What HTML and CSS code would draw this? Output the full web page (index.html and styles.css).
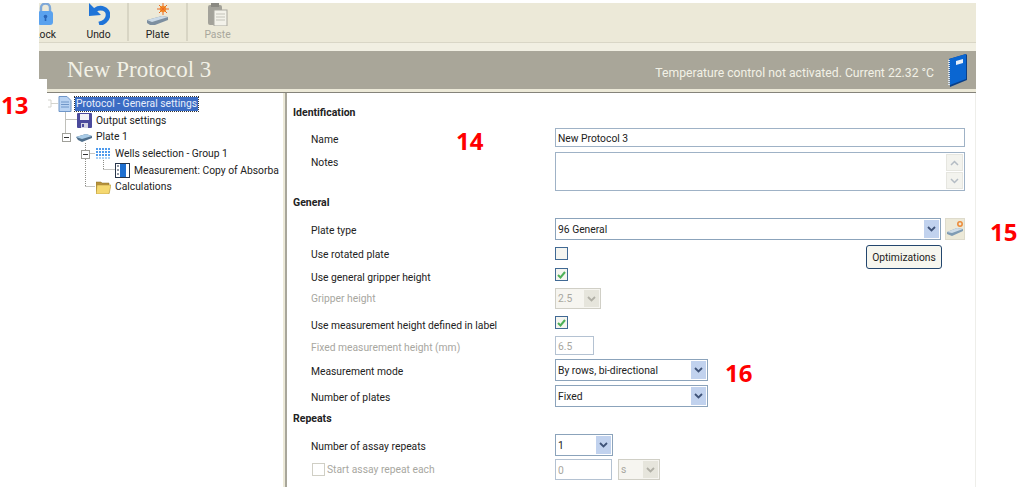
FILE: index.html
```html
<!DOCTYPE html>
<html lang="en">
<head>
    <meta charset="UTF-8">
    <meta name="viewport" content="width=device-width, initial-scale=1.0">
    <title>New Protocol 3</title>
    <link rel="stylesheet" href="styles.css">
</head>
<body>
    <div class="window">
        <div class="toolbar">
            <div class="tool tool-lock">
                <svg width="16" height="22" viewBox="0 0 16 22"><path d="M3 10V5a4.500 4.500 0 0 1 9 0v5" fill="none" stroke="#7fa8d8" stroke-width="2.400"/><rect x="0" y="8" width="15" height="14" rx="3" fill="#5aa2ee"/><circle cx="7.500" cy="13.500" r="1.800" fill="#2a66b8"/><rect x="6.700" y="14" width="1.600" height="4" fill="#2a66b8"/></svg>
                <span>Lock</span>
            </div>
            <div class="tool tool-sep">
                <svg width="22" height="22" viewBox="0 0 22 22"><path d="M7 7C13 3 20 6 20 12C20 17 15 20 11 21" fill="none" stroke="#1f74d8" stroke-width="4.500"/><path d="M1 0L1 13L13 12z" fill="#1f74d8"/></svg>
                <span>Undo</span>
            </div>
            <div class="tool tool-sep">
                <svg width="24" height="23" viewBox="0 0 24 23"><path d="M1 17l15-4 6 1v3L9 22H4l-3-2z" fill="#7d8fa0"/><path d="M1 17l15-4 6 1L6 19z" fill="#ccdbe8"/><circle cx="17" cy="6" r="3.200" fill="#f0a030"/><path d="M17 0v12M11 6h12M13 2l8 8M21 2l-8 8" stroke="#ee6a20" stroke-width="1"/></svg>
                <span>Plate</span>
            </div>
            <div class="tool tool-off">
                <svg width="20" height="23" viewBox="0 0 20 23"><rect x="0" y="2" width="14" height="20" rx="2" fill="#a3a29a"/><rect x="3" y="0" width="8" height="4" fill="#8a8982"/><rect x="6" y="7" width="13" height="16" fill="#f3f2ea" stroke="#a9a89f"/><path d="M8 11h9M8 14h9M8 17h9" stroke="#c4c3ba"/></svg>
                <span>Paste</span>
            </div>
        </div>
        <div class="toolbar-strip"></div>

        <div class="title-bar">
            <h1>New Protocol 3</h1>
            <span class="temperature">Temperature control not activated. Current 22.32 °C</span>
            <svg class="book" width="22" height="34" viewBox="0 0 22 34"><path d="M3 6L20 1l1 1v25L4 34z" fill="#0a3f88"/><path d="M3 6L20 1v25L4 32z" fill="#0a66d2"/><path d="M3 7v25" stroke="#d8e4f2" stroke-width="2" stroke-dasharray="1 1"/><path d="M10 8l7-2v4l-7 2z" fill="#e8f0fa"/></svg>
        </div>
        <div class="title-strip"></div>

        <div class="main">
            <div class="tree">
                <svg class="tree-lines" width="234" height="120">
                    <path d="M3 7v7M0 7h3M0 14h3M3 10.500h7" fill="none" stroke="#d4d4ce"/>
                    <path d="M17.500 18v25M17.500 26.500h12" fill="none" stroke="#c0c0ba"/>
                    <path d="M37.500 50v43M37.500 60.500h10M37.500 93.500h10M55.500 67v9M55.500 76.500h11" fill="none" stroke="#8c8c86" stroke-dasharray="1 1"/>
                </svg>
                <div class="tree-row level-0">
                    <svg class="tree-icon" width="14" height="16" viewBox="0 0 14 16"><path d="M1 .5h8l4 4v11H1z" fill="#b9d3f2" stroke="#6f96c8"/><path d="M3 6h8M3 8.500h8M3 11h8" stroke="#6f96c8"/></svg>
                    <span class="tree-label selected">Protocol - General settings</span>
                </div>
                <div class="tree-row level-1">
                    <svg class="tree-icon" width="15" height="15" viewBox="0 0 15 15"><rect width="15" height="15" rx="1" fill="#4b4a9c"/><rect x="3" y="1" width="9" height="6" fill="#f2f2f6"/><rect x="4" y="10" width="7" height="5" fill="#d4d4e4"/><rect x="5" y="11" width="2" height="3" fill="#4b4a9c"/></svg>
                    <span class="tree-label">Output settings</span>
                </div>
                <div class="tree-row level-plate">
                    <span class="expander"></span>
                    <svg class="tree-icon" width="16" height="9" viewBox="0 0 16 9"><path d="M0 4l10-3 6 2v2L6 9 2 7z" fill="#4f6f8c"/><path d="M0 4l10-3 6 2L6 6z" fill="#a9cbe6"/></svg>
                    <span class="tree-label">Plate 1</span>
                </div>
                <div class="tree-row level-wells">
                    <span class="expander"></span>
                    <svg class="tree-icon" width="15" height="13" viewBox="0 0 15 13"><path d="M0 1h14M0 4h14M0 7h14" stroke="#4f9aec" stroke-width="2" stroke-dasharray="2 1"/><path d="M0 10h14" stroke="#a8d0f6" stroke-width="2" stroke-dasharray="2 1"/></svg>
                    <span class="tree-label">Wells selection - Group 1</span>
                </div>
                <div class="tree-row level-measure">
                    <svg class="tree-icon" width="15" height="15" viewBox="0 0 15 15"><rect x=".5" y=".5" width="14" height="14" fill="#fff" stroke="#26354a"/><rect x="5" y="1" width="6" height="13" fill="#1e6fd0"/><path d="M2 3h2M2 7h2M2 11h2" stroke="#26354a"/></svg>
                    <span class="tree-label">Measurement: Copy of Absorba</span>
                </div>
                <div class="tree-row level-calc">
                    <svg class="tree-icon" width="15" height="14" viewBox="0 0 15 14"><path d="M0 2h5l1 1h7v10H0z" fill="#b8923c" stroke="#8a6c24" stroke-width=".5"/><path d="M1 5h14l-2 9H0z" fill="#f5d870" stroke="#a88a34" stroke-width=".5"/></svg>
                    <span class="tree-label">Calculations</span>
                </div>
            </div>

            <div class="divider"></div>

            <form class="settings">
                <h2>Identification</h2>
                <div class="row mt8">
                    <label>Name</label>
                    <input class="field wide" type="text" value="New Protocol 3">
                </div>
                <div class="row row-top mt5">
                    <label>Notes</label>
                    <div class="field wide notes">
                        <div class="scroll">
                            <span class="scroll-btn"><svg width="9" height="6" viewBox="0 0 9 6"><path d="M1 5l3.500-3.500L8 5" fill="none" stroke="#b4bcc4" stroke-width="1.500"/></svg></span>
                            <span class="scroll-btn"><svg width="9" height="6" viewBox="0 0 9 6"><path d="M1 1l3.500 3.500L8 1" fill="none" stroke="#b4bcc4" stroke-width="1.500"/></svg></span>
                        </div>
                    </div>
                </div>

                <h2 class="mt3">General</h2>
                <div class="row mt8">
                    <label>Plate type</label>
                    <div class="combo plate-combo">
                        <span>96 General</span>
                        <span class="arrow"><svg width="9" height="6" viewBox="0 0 9 6"><path d="M1 1l3.500 3.500L8 1" fill="none" stroke="#3f5378" stroke-width="1.800"/></svg></span>
                    </div>
                    <button class="plate-btn" type="button">
                        <svg width="18" height="16" viewBox="0 0 18 16"><path d="M1 11l10-4 6 1v2L6 15 1 13z" fill="#7f9cb4"/><path d="M1 11l10-4 6 1-11 4z" fill="#cfdde8"/><circle cx="14" cy="3" r="2.200" fill="none" stroke="#ec8a38" stroke-width="1.500"/></svg>
                    </button>
                </div>
                <div class="row row-check mt6">
                    <label>Use rotated plate</label>
                    <span class="check check-low"></span>
                    <button class="opt-btn" type="button">Optimizations</button>
                </div>
                <div class="row row-check mt7">
                    <label>Use general gripper height</label>
                    <span class="check"><svg width="9" height="8" viewBox="0 0 9 8"><path d="M1 4l2.500 2.500L8 1" fill="none" stroke="#2fa33a" stroke-width="2"/></svg></span>
                </div>
                <div class="row off row-gripper mt3">
                    <label>Gripper height</label>
                    <div class="combo combo-gripper">
                        <span>2.5</span>
                        <span class="arrow"><svg width="9" height="6" viewBox="0 0 9 6"><path d="M1 1l3.500 3.500L8 1" fill="none" stroke="#b0afa6" stroke-width="1.800"/></svg></span>
                    </div>
                </div>
                <div class="row row-check mt8">
                    <label>Use measurement height defined in label</label>
                    <span class="check"><svg width="9" height="8" viewBox="0 0 9 8"><path d="M1 4l2.500 2.500L8 1" fill="none" stroke="#2fa33a" stroke-width="2"/></svg></span>
                </div>
                <div class="row off mt3">
                    <label>Fixed measurement height (mm)</label>
                    <input class="field fixed" type="text" value="6.5" disabled>
                </div>
                <div class="row mt4">
                    <label>Measurement mode</label>
                    <div class="combo combo-mode">
                        <span>By rows, bi-directional</span>
                        <span class="arrow"><svg width="9" height="6" viewBox="0 0 9 6"><path d="M1 1l3.500 3.500L8 1" fill="none" stroke="#3f5378" stroke-width="1.800"/></svg></span>
                    </div>
                </div>
                <div class="row mt4">
                    <label>Number of plates</label>
                    <div class="combo combo-mode">
                        <span>Fixed</span>
                        <span class="arrow"><svg width="9" height="6" viewBox="0 0 9 6"><path d="M1 1l3.500 3.500L8 1" fill="none" stroke="#3f5378" stroke-width="1.800"/></svg></span>
                    </div>
                </div>

                <h2 class="mt3">Repeats</h2>
                <div class="row mt8">
                    <label>Number of assay repeats</label>
                    <div class="combo combo-small">
                        <span>1</span>
                        <span class="arrow"><svg width="9" height="6" viewBox="0 0 9 6"><path d="M1 1l3.500 3.500L8 1" fill="none" stroke="#3f5378" stroke-width="1.800"/></svg></span>
                    </div>
                </div>
                <div class="row off mt3">
                    <label class="label-check"><span class="check check-off"></span>Start assay repeat each</label>
                    <input class="field every" type="text" value="0" disabled>
                    <div class="combo combo-unit">
                        <span>s</span>
                        <span class="arrow"><svg width="9" height="6" viewBox="0 0 9 6"><path d="M1 1l3.500 3.500L8 1" fill="none" stroke="#b0afa6" stroke-width="1.800"/></svg></span>
                    </div>
                </div>
            </form>
        </div>
    </div>

    <span class="callout callout-13">13</span>
    <span class="callout callout-14">14</span>
    <span class="callout callout-15">15</span>
    <span class="callout callout-16">16</span>
</body>
</html>
```

FILE: styles.css
```css
* {
    box-sizing: border-box;
}
html, body {
    height: 100%;
}
body {
    margin: 0;
    background: #fff;
    font-family: Roboto, sans-serif;
    font-size: 10.3px;
    color: #222;
    overflow: hidden;
}
.window {
    width: 937px;
    margin: 3px 0 0 39px;
}

/* toolbar */
.toolbar {
    display: flex;
    height: 38px;
    background: #ece9d8;
    overflow: hidden;
}
.tool {
    display: flex;
    flex-direction: column;
    align-items: center;
    justify-content: space-between;
    width: 59px;
    flex: none;
    height: 38px;
}
.tool span {
    height: 14px;
    line-height: 16px;
}
.tool-lock {
    width: 50px;
    margin-left: -19px;
}
.tool-lock svg {
    margin-left: 1px;
}
.tool-sep {
    border-right: 2px solid #d8d5c4;
}
.tool-off {
    color: #a8a79c;
}
.toolbar-strip {
    height: 10px;
    background: #f1efe2;
    border-top: 1px solid #ece9d8;
    box-shadow: inset 0 1px 0 #d9d6c6;
}

/* title */
.title-bar {
    display: flex;
    align-items: center;
    height: 38px;
    padding: 0 8px 0 28px;
    background: #a9a699;
    color: #f2f1e6;
    position: relative;
}
.title-bar::after {
    content: "";
    position: absolute;
    left: 0;
    bottom: 0;
    width: 8px;
    height: 10px;
    background: #fff;
}
.title-bar h1 {
    margin: 0 auto 0 0;
    font-family: "Liberation Serif", serif;
    font-size: 23px;
    font-weight: normal;
}
.temperature {
    font-size: 12.2px;
    margin: 5px 12px 0 0;
}
.title-strip {
    height: 4px;
    margin-left: 8px;
    background: #ece9d8;
    border-bottom: 1px solid #85837a;
}

/* tree */
.main {
    display: flex;
    height: 394px;
}
.tree {
    width: 235px;
    margin-left: 9px;
    flex: none;
    position: relative;
    overflow: hidden;
    padding-top: 3px;
}
.tree-lines {
    position: absolute;
    left: 0;
    top: 0;
}
.tree-row {
    display: flex;
    align-items: center;
    height: 16.6px;
    white-space: nowrap;
    position: relative;
}
.tree-icon {
    flex: none;
    margin-right: 3px;
}
.level-0 {
    padding-left: 10px;
}
.level-1 {
    padding-left: 29px;
}
.level-plate {
    padding-left: 14px;
}
.level-wells {
    padding-left: 33px;
}
.level-wells .expander {
    margin-right: 6px;
}
.level-measure {
    padding-left: 67px;
}
.level-calc {
    padding-left: 48px;
}
.expander {
    width: 9px;
    height: 9px;
    margin-right: 5px;
    flex: none;
    background: #fff;
    border: 1px solid #a0a09a;
    position: relative;
}
.expander::after {
    content: "";
    position: absolute;
    left: 1px;
    top: 3px;
    width: 5px;
    height: 1px;
    background: #333;
}
.tree-label {
    padding: 0 1px;
    line-height: 14px;
}
.selected {
    background: #3b6cc4;
    color: #e8eefa;
    outline: 1px dotted #333;
}

.divider {
    width: 4px;
    flex: none;
    background: #ece9d8;
    border-right: 2px solid #a8a69a;
}

/* settings form */
.settings {
    flex: 1;
    padding: 11px 10px 0 6px;
    border-right: 1px solid #eeeeea;
    overflow: hidden;
}
h2 {
    margin: 0;
    height: 16px;
    font-size: 10.5px;
    font-weight: bold;
    line-height: 18px;
    color: #222;
}
.row {
    display: flex;
    align-items: center;
    padding-left: 18px;
}
.row-top {
    align-items: flex-start;
}
.row-check {
    align-items: flex-start;
    height: 16px;
}
.row label {
    width: 244px;
    height: 18px;
    flex: none;
    line-height: 22px;
}
.row-check label {
    height: 16px;
    line-height: 18px;
}
.row-gripper label {
    height: 16px;
    line-height: 16px;
}
.row-top label {
    height: 20px;
    line-height: 22px;
}
.off, .off input {
    color: #a8a79f;
}
.mt3 { margin-top: 3px; }
.mt4 { margin-top: 4px; }
.mt5 { margin-top: 5px; }
.mt6 { margin-top: 6px; }
.mt7 { margin-top: 7px; }
.mt8 { margin-top: 8px; }

.field {
    height: 19px;
    border: 1px solid #9fb2c6;
    background: #fff;
    padding: 1px 2px 0;
    font: inherit;
    color: inherit;
}
.wide {
    width: 412px;
}
.fixed {
    width: 39px;
    height: 19px;
    border-color: #b4c2d2;
}
.every {
    width: 57px;
    height: 21px;
    border-color: #b4c2d2;
}
.notes {
    height: 39px;
    display: flex;
    justify-content: flex-end;
    padding: 1px;
}
.scroll {
    width: 17px;
    display: flex;
    flex-direction: column;
    gap: 1px;
}
.scroll-btn {
    flex: 1;
    display: flex;
    align-items: center;
    justify-content: center;
    background: #f3f3ee;
    border: 1px solid #e6e6e0;
}

.combo {
    display: flex;
    align-items: center;
    justify-content: space-between;
    height: 22px;
    background: #fff;
    border: 1px solid #8ba3bb;
    padding: 1px 1px 1px 2px;
}
.off .combo {
    border-color: #d0cfc6;
    background: #f6f5f0;
}
.arrow {
    display: flex;
    align-items: center;
    justify-content: center;
    width: 15px;
    height: 100%;
    background: #c1d2ee;
}
.off .arrow {
    background: #e6e5dc;
}
.plate-combo {
    width: 388px;
}
.combo-gripper {
    width: 46px;
    height: 21px;
}
.combo-mode {
    width: 153px;
}
.combo-small {
    width: 58px;
}
.combo-unit {
    width: 42px;
    height: 21px;
    margin-left: 6px;
}

.plate-btn {
    width: 20px;
    height: 22px;
    margin-left: 4px;
    padding: 0;
    display: flex;
    align-items: center;
    justify-content: center;
    border: 1px solid #dedbcc;
    background: #ece9d8;
}
.opt-btn {
    width: 76px;
    height: 24px;
    margin: -1px 23px -9px auto;
    padding: 0;
    font: inherit;
    color: #222;
    background: #f6f6ef;
    border: 1px solid #23466e;
    border-radius: 3px;
}
.check {
    display: flex;
    align-items: center;
    justify-content: center;
    width: 13px;
    height: 13px;
    margin-top: -1px;
    flex: none;
    background: #f4f4ee;
    border: 1px solid #1f4f82;
    opacity: .85;
}
.check-low {
    margin-top: 1px;
}
.check-off {
    margin: 0 2px 0 1px;
    border-color: #c8c7bc;
    background: #fff;
}
.row .label-check {
    display: flex;
    align-items: center;
}

/* red numbers on top of the screenshot */
.callout {
    position: absolute;
    font-family: "Open Sans", sans-serif;
    font-weight: bold;
    font-size: 24px;
    line-height: 24px;
    color: #f00;
}
.callout-13 {
    left: 1px;
    top: 93px;
}
.callout-14 {
    left: 456px;
    top: 129px;
}
.callout-15 {
    left: 990px;
    top: 220px;
}
.callout-16 {
    left: 725px;
    top: 361px;
}
```
